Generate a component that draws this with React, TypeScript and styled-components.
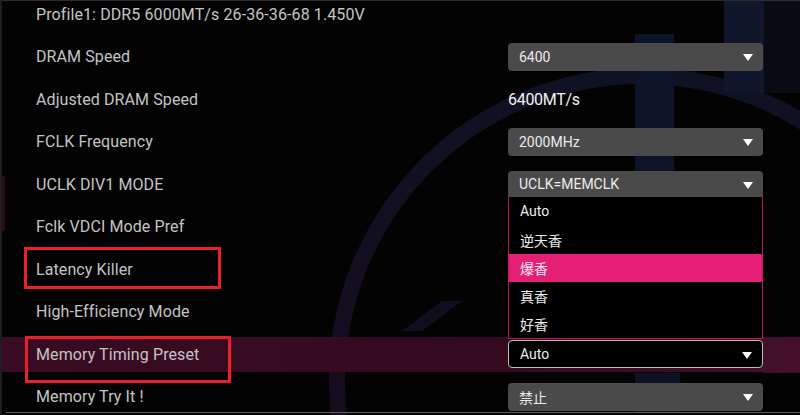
import React from 'react';
import styled, { createGlobalStyle } from 'styled-components';

const GlobalStyle = createGlobalStyle`
  html, body {
    margin: 0;
    padding: 0;
    background: #000;
  }
  body {
    font-family: Roboto, "Noto Sans", "Noto Sans CJK SC", sans-serif;
  }
`;

const Screen = styled.div`
  position: relative;
  width: 800px;
  height: 415px;
  overflow: hidden;
  background: #030303;
  border-top: 1px solid #2c2c2c;
  border-left: 2px solid #1e1e1e;
  box-sizing: border-box;
`;

const Art = styled.svg`
  position: absolute;
  inset: 0;
  z-index: 0;
`;

const List = styled.div`
  position: relative;
  z-index: 1;
  display: flex;
  flex-direction: column;
  margin-top: -8px;
`;

const Row = styled.div<{ $active?: boolean }>`
  display: grid;
  grid-template-columns: 472px 255px;
  align-items: center;
  height: 42.5px;
  box-sizing: border-box;
  background: ${p =>
    p.$active
      ? 'linear-gradient(90deg, #3a0b22, #340a1f 60%, #44102a) 0 4px / 100% calc(100% - 8px) no-repeat'
      : 'transparent'};
  margin-left: ${p => (p.$active ? '-2px' : '0')};
  padding-left: ${p => (p.$active ? '36px' : '34px')};
`;

const Label = styled.span`
  font-size: 16px;
  color: #c4c4c4;
  letter-spacing: 0.1px;
  white-space: nowrap;
`;

const Value = styled.span`
  font-size: 16px;
  letter-spacing: -0.3px;
  color: #f2f2f2;
`;

const Select = styled.div<{ $open?: boolean; $outlined?: boolean }>`
  position: relative;
  display: flex;
  align-items: center;
  justify-content: space-between;
  height: ${p => (p.$open ? '26px' : '28px')};
  padding: 0 10px 0 11px;
  box-sizing: border-box;
  background: ${p => (p.$outlined ? '#000' : '#4a4a4a')};
  border: ${p => (p.$outlined ? '1px solid #bdbdbd' : 'none')};
  border-radius: ${p => (p.$open ? '4px 4px 0 0' : '4px')};
  font-size: 14px;
  color: #ececec;
`;

const Arrow = styled.span`
  width: 0;
  height: 0;
  border-left: 5px solid transparent;
  border-right: 5px solid transparent;
  border-top: 7px solid #fff;
  margin-top: 2px;
`;

const Menu = styled.div`
  position: absolute;
  top: 100%;
  left: 0;
  right: 0;
  z-index: 3;
  background: #000;
  border: 1px solid #b8175c;
  border-top: none;
`;

const Option = styled.div<{ $selected?: boolean }>`
  height: 28.2px;
  display: flex;
  align-items: center;
  padding-left: 11px;
  font-size: 14px;
  color: #ececec;
  background: ${p => (p.$selected ? '#e61f76' : 'transparent')};
`;

const Marker = styled.div<{ $x: number; $y: number; $w: number; $h: number }>`
  position: absolute;
  z-index: 4;
  left: ${p => p.$x}px;
  top: ${p => p.$y}px;
  width: ${p => p.$w}px;
  height: ${p => p.$h}px;
  box-sizing: border-box;
  border: 3px solid #e8202a;
`;

const BottomRule = styled.div`
  position: absolute;
  left: 4px;
  right: 0;
  bottom: 2px;
  height: 1px;
  background: #5e5e5e;
  z-index: 2;
`;

const options = ['Auto', '逆天香', '爆香', '真香', '好香'];

const Background: React.FC = () => (
  <Art width="800" height="415" viewBox="0 0 800 415">
    <defs>
      <linearGradient id="ring" x1="0" y1="0" x2="0" y2="1">
        <stop offset="0" stopColor="#0e1222" />
        <stop offset="0.5" stopColor="#170c1f" />
        <stop offset="1" stopColor="#210b20" />
      </linearGradient>
    </defs>
    <circle cx="640" cy="380" r="305" fill="none" stroke="url(#ring)" strokeWidth="16" />
    <rect x="633" y="33" width="39" height="150" fill="#0e1428" />
    <rect x="722" y="0" width="40" height="92" fill="#10172a" />
    <rect x="762" y="0" width="38" height="92" fill="#080b14" />
    <path d="M400 330 L440 300 L460 300 L420 330 Z" fill="#0f0d1e" />
    <rect x="633" y="372" width="45" height="40" fill="#0d1224" />
    <path d="M760 372 L800 345 L800 372 Z" fill="#3c0c28" />
    <rect x="0" y="175" width="3" height="55" fill="#2a0b1c" />
  </Art>
);

const App: React.FC = () => {
  return (
    <>
      <GlobalStyle />
      <Screen>
        <Background />
        <List>
          <Row>
            <Label>Profile1: DDR5 6000MT/s 26-36-36-68 1.450V</Label>
          </Row>
          <Row>
            <Label>DRAM Speed</Label>
            <Select>
              6400
              <Arrow />
            </Select>
          </Row>
          <Row>
            <Label>Adjusted DRAM Speed</Label>
            <Value>6400MT/s</Value>
          </Row>
          <Row>
            <Label>FCLK Frequency</Label>
            <Select>
              2000MHz
              <Arrow />
            </Select>
          </Row>
          <Row>
            <Label>UCLK DIV1 MODE</Label>
            <Select $open>
              UCLK=MEMCLK
              <Arrow />
              <Menu>
                {options.map(o => (
                  <Option key={o} $selected={o === '爆香'}>
                    {o}
                  </Option>
                ))}
              </Menu>
            </Select>
          </Row>
          <Row>
            <Label>Fclk VDCI Mode Pref</Label>
          </Row>
          <Row>
            <Label>Latency Killer</Label>
          </Row>
          <Row>
            <Label>High-Efficiency Mode</Label>
          </Row>
          <Row $active>
            <Label>Memory Timing Preset</Label>
            <Select $outlined>
              Auto
              <Arrow />
            </Select>
          </Row>
          <Row>
            <Label>Memory Try It !</Label>
            <Select>
              禁止
              <Arrow />
            </Select>
          </Row>
        </List>
        <Marker $x={22} $y={246} $w={197} $h={42} />
        <Marker $x={23} $y={335} $w={206} $h={47} />
        <BottomRule />
      </Screen>
    </>
  );
};

export default App;
